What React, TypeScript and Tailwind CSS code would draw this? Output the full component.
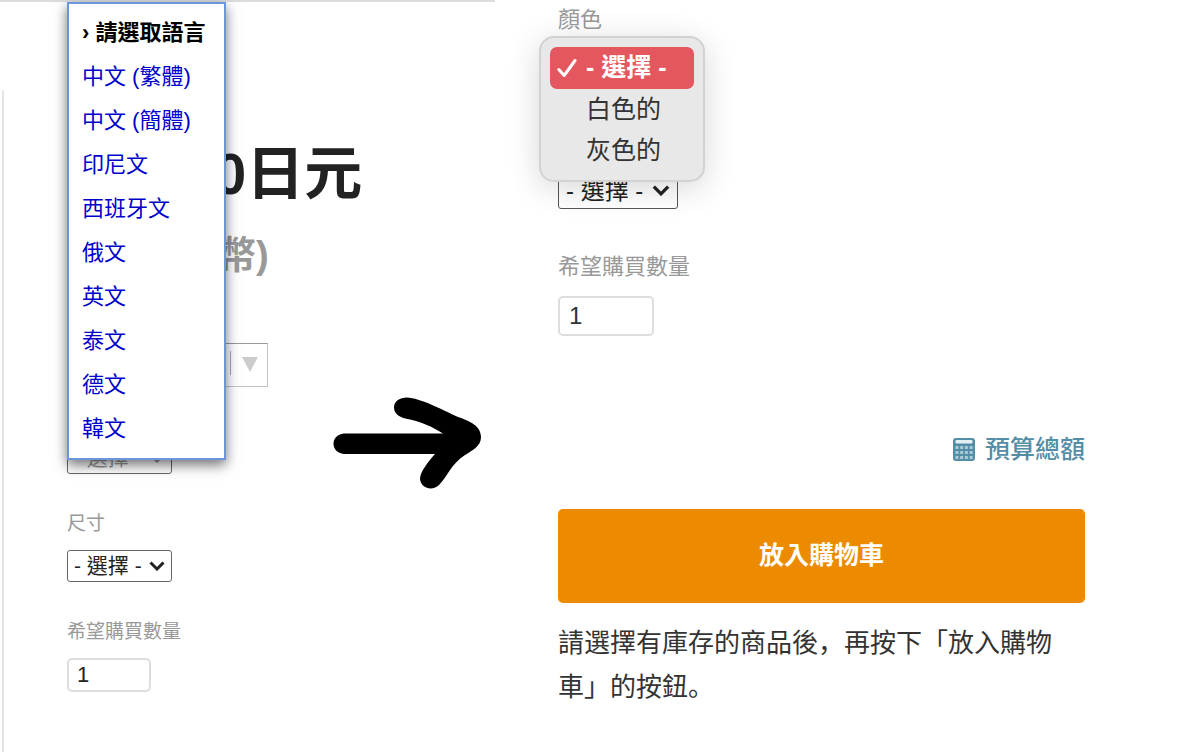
import type { ReactNode } from 'react';

const LANGUAGES = ['中文 (繁體)', '中文 (簡體)', '印尼文', '西班牙文', '俄文', '英文', '泰文', '德文', '韓文'];
const COLORS = ['白色的', '灰色的'];

function LanguageMenu() {
  return (
    <nav
      aria-label="請選取語言"
      className="absolute left-[67px] top-[2px] z-10 w-[159px] border-2 border-[#6b95dd] bg-white px-[13px] py-[7px] text-[22px] leading-[44px] shadow-[0_5px_12px_rgba(0,0,0,0.55)]"
    >
      <p className="whitespace-nowrap font-bold text-black">› 請選取語言</p>
      <ul>
        {LANGUAGES.map((name) => (
          <li key={name}>
            <a href="#" className="block whitespace-nowrap text-[#0000cc]">{name}</a>
          </li>
        ))}
      </ul>
    </nav>
  );
}

function Chevron({ className }: { className: string }) {
  return (
    <svg className={className} viewBox="0 0 16 10" fill="none" stroke="currentColor" strokeWidth={3}>
      <path d="M1.5 1.5 8 8l6.500-6.500" />
    </svg>
  );
}

function SmallSelect({ id, label, muted }: { id: string; label?: string; muted?: boolean }) {
  return (
    <div className={`relative w-[105px] ${muted ? 'text-[#999]' : 'text-[#222]'}`}>
      <select
        id={id}
        aria-label={label}
        className="block h-8 w-full appearance-none rounded-[3px] border border-[#666] bg-white pl-[6px] text-[21px] leading-[28px]"
      >
        <option>- 選擇 -</option>
      </select>
      <Chevron className="pointer-events-none absolute right-[7px] top-[11px] h-[10px] w-4" />
    </div>
  );
}

function LargeSelect({ id }: { id: string }) {
  return (
    <div className="relative w-[120px] text-[#222]">
      <select
        id={id}
        className="block h-9 w-full appearance-none rounded-[3px] border border-[#555] bg-white pl-[7px] text-[24px] leading-[32px]"
      >
        <option>- 選擇 -</option>
      </select>
      <Chevron className="pointer-events-none absolute right-[8px] top-[12px] h-[11px] w-[18px]" />
    </div>
  );
}

function Label({ htmlFor, className, children }: { htmlFor: string; className: string; children: ReactNode }) {
  return (
    <label htmlFor={htmlFor} className={`block leading-[30px] text-[#999] ${className}`}>
      {children}
    </label>
  );
}

function ColorOptions() {
  return (
    <ul
      role="listbox"
      aria-label="顏色"
      className="absolute -left-[19px] top-[36px] z-10 w-[166px] rounded-[15px] border-2 border-[#d2d2d2] bg-[#e8e8e8] px-[9px] py-[9px] text-[25px] text-[#333] shadow-[0_6px_32px_rgba(0,0,0,0.16)]"
    >
      <li
        role="option"
        aria-selected="true"
        className="flex h-[42px] items-center gap-[9px] rounded-[7px] bg-[#e4575f] pl-[7px] font-bold text-white"
      >
        <svg className="h-5 w-5" viewBox="0 0 20 20" fill="none" stroke="currentColor" strokeWidth={3} strokeLinecap="round" strokeLinejoin="round">
          <path d="M1.800 11.500 7.200 17.500 18 2.500" />
        </svg>
        <span className="whitespace-nowrap">- 選擇 -</span>
      </li>
      {COLORS.map((color) => (
        <li key={color} role="option" aria-selected="false" className="flex h-[41px] items-center pl-[36px]">
          {color}
        </li>
      ))}
    </ul>
  );
}

function CalculatorIcon() {
  return (
    <svg className="h-[23px] w-[22px]" viewBox="0 0 22 23">
      <rect x="0" y="0" width="22" height="23" rx="3" fill="#548da6" />
      <rect x="2.500" y="2" width="17" height="3.500" rx="1" fill="#e4eff3" />
      <g fill="#a9cbd8">
        {[8, 13, 18].map((y) =>
          [2.5, 7.2, 11.900, 16.600].map((x) => <rect key={`${x}-${y}`} x={x} y={y} width="3" height="3" />)
        )}
      </g>
    </svg>
  );
}

function Arrow() {
  return (
    <svg className="absolute left-[333px] top-[397px] z-20 h-[93px] w-[149px]" viewBox="0 0 149 93">
      <path
        d="M11 36.500H110C100 30 88 25 77 22.500C67 21 61 17 61 10.500C61 4 67 0.500 74 0.500C87 1 108 12 125 20C137 24 148 29 148 40C148 49 140 53 132 58C117 68 115 79 106 88C100 94 88 92 87 82C87 75 95 65 102 57H11C-3 56 -3 37.500 11 36.500Z"
        fill="#000"
      />
    </svg>
  );
}

function SourcePanel() {
  return (
    <section className="flex w-[495px] shrink-0 flex-col border-t-2 border-[#dcdcdc] pt-[88px]">
      <div className="ml-[2px] flex-1 border-l-2 border-[#e4e4e4] pb-[60px] pl-[63px] pt-[48px]">
        <h1 className="pl-[147px] text-[58px] font-bold leading-[72px] text-[#222]">0日元</h1>
        <p className="mt-[21px] pl-[151px] text-[38px] font-bold leading-[48px] text-[#999]">幣)</p>
        <button
          type="button"
          aria-label="請選取語言"
          className="mt-[64px] flex h-[44px] w-[201px] items-center justify-end gap-[11px] border border-[#c4c4c4] border-t-[#999] pr-[9px]"
        >
          <span className="mb-[4px] h-6 w-px bg-[#aaa]" />
          <svg className="mb-[2px] h-[15px] w-4" viewBox="0 0 16 15">
            <path d="M0 0h16L8 15z" fill="#ccc" />
          </svg>
        </button>
        <div className="mt-[55px]">
          <SmallSelect id="color" label="顏色" muted />
        </div>
        <Label htmlFor="size" className="mt-[35px] text-[19px]">尺寸</Label>
        <div className="mt-[11px]">
          <SmallSelect id="size" />
        </div>
        <Label htmlFor="quantity" className="mt-[35px] text-[19px]">希望購買數量</Label>
        <input
          id="quantity"
          type="text"
          defaultValue="1"
          className="mt-[11px] block h-[34px] w-[84px] rounded-[5px] border-2 border-[#ddd] bg-white pl-[8px] text-[22px] text-[#222]"
        />
      </div>
    </section>
  );
}

function OrderPanel() {
  return (
    <section className="min-w-0 flex-1 pl-[63px] pr-[115px] pt-[5px]">
      <Label htmlFor="picked-color" className="text-[22px]">顏色</Label>
      <div className="mt-[138px]">
        <LargeSelect id="picked-color" />
      </div>
      <Label htmlFor="picked-quantity" className="mt-[43px] text-[22px]">希望購買數量</Label>
      <input
        id="picked-quantity"
        type="text"
        defaultValue="1"
        className="mt-[14px] block h-[40px] w-[96px] rounded-[5px] border-2 border-[#ddd] bg-white pl-[9px] text-[24px] text-[#333]"
      />
      <div className="mt-[95px] flex justify-end">
        <a href="#" className="flex items-center gap-[10px] text-[25px] font-medium leading-[36px] text-[#548da6]">
          <CalculatorIcon />
          預算總額
        </a>
      </div>
      <button
        type="button"
        className="mt-[42px] block h-[94px] w-full rounded-[5px] bg-[#ec8b00] text-[25px] font-bold text-white"
      >
        放入購物車
      </button>
      <p className="mt-[16px] font-['Noto_Sans_CJK_SC',sans-serif] text-[26px] leading-[44px] text-[#333]">
        請選擇有庫存的商品後，再按下「放入購物車」的按鈕。
      </p>
    </section>
  );
}

export default function App() {
  return (
    <main className="relative flex min-h-screen bg-white font-['Liberation_Sans','Noto_Sans_CJK_TC',sans-serif]">
      <SourcePanel />
      <OrderPanel />
      <LanguageMenu />
      <div className="absolute left-[558px] top-0">
        <ColorOptions />
      </div>
      <Arrow />
    </main>
  );
}
